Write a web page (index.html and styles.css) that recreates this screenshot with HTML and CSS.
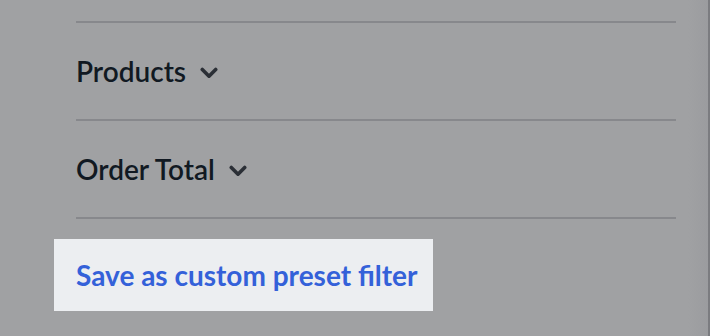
FILE: index.html
```html
<!DOCTYPE html>
<html>
<head>
<meta charset="utf-8">
<link rel="stylesheet" href="styles.css">
</head>
<body>
<div class="panel">
  <div class="filters">
    <div class="filter">
      <span class="label">Products</span>
      <svg class="chev" width="18" height="12" viewBox="0 0 18 12"><polyline points="2.3,2.5 9,9.2 15.7,2.5" fill="none" stroke="#2b2f36" stroke-width="3.6" stroke-linecap="round" stroke-linejoin="round"/></svg>
    </div>
    <div class="filter">
      <span class="label">Order Total</span>
      <svg class="chev" width="18" height="12" viewBox="0 0 18 12"><polyline points="2.3,2.5 9,9.2 15.7,2.5" fill="none" stroke="#2b2f36" stroke-width="3.6" stroke-linecap="round" stroke-linejoin="round"/></svg>
    </div>
    <div class="end"></div>
  </div>
  <div class="save-wrap">
    <button class="save">Save as custom preset filter</button>
  </div>
</div>
</body>
</html>
```
FILE: styles.css
```css
html, body {
  margin: 0;
  padding: 0;
  height: 100%;
}
body {
  background: linear-gradient(to right, #a0a1a3 0, #a0a1a3 calc(100% - 22px), #9b9c9f calc(100% - 2px), #7b7c80 calc(100% - 2px));
  font-family: Lato, "Noto Sans", sans-serif;
  overflow: hidden;
}
.panel {
  padding-top: 21px;
  padding-left: 76px;
  width: 600px;
}
.filter {
  border-top: 2px solid #87888c;
  height: 96px;
  display: flex;
  align-items: center;
  gap: 14px;
}
.label {
  font-size: 28px;
  font-weight: 600;
  color: #111922;
  letter-spacing: 0;
}
.chev {
  margin-top: 3px;
}
.end {
  border-top: 2px solid #87888c;
}
.save-wrap {
  padding-top: 20px;
  margin-left: -22px;
}
.save {
  display: inline-flex;
  align-items: center;
  height: 72px;
  padding: 0 16px 0 22px;
  border: 0;
  background: #eceef1;
  color: #3461d9;
  font-family: Lato, "Noto Sans", sans-serif;
  font-size: 28px;
  font-weight: 700;
  cursor: pointer;
}
```
